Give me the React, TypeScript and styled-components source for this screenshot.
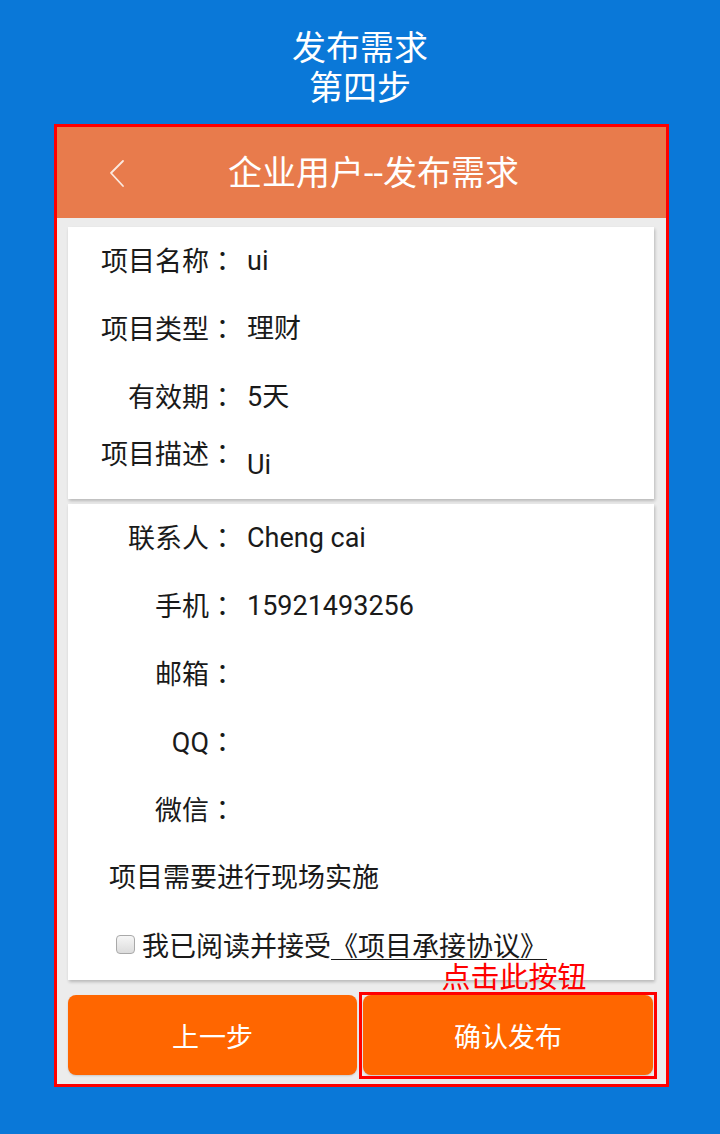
import styled, { createGlobalStyle } from 'styled-components';

const GlobalStyle = createGlobalStyle`
  html, body {
    margin: 0;
    padding: 0;
    background: #0a78d8;
  }
  body {
    font-family: Roboto, "Noto Sans CJK SC", sans-serif;
  }
`;

type Field = { label: string; value?: string };

const projectFields: Field[] = [
  { label: '项目名称', value: 'ui' },
  { label: '项目类型', value: '理财' },
  { label: '有效期', value: '5天' },
];

const contactFields: Field[] = [
  { label: '联系人', value: 'Cheng cai' },
  { label: '手机', value: '15921493256' },
  { label: '邮箱' },
  { label: 'QQ' },
  { label: '微信' },
];

const BackIcon = () => (
  <svg width="24" height="30" viewBox="0 0 24 30" fill="none">
    <path d="M16 3 L4 15 L16 28" stroke="#fbe9df" strokeWidth="1.8" strokeLinecap="round" strokeLinejoin="round" />
  </svg>
);

const App = () => {
  return (
    <Page>
      <GlobalStyle />
      <PageTitle>
        发布需求
        <br />
        第四步
      </PageTitle>
      <Frame>
        <Header>
          <BackButton>
            <BackIcon />
          </BackButton>
          <HeaderTitle>企业用户--发布需求</HeaderTitle>
        </Header>
        <Body>
          <Card>
            {projectFields.map((f) => (
              <Row key={f.label}>
                <Label>
                  {f.label}
                  <Colon>：</Colon>
                </Label>
                <Value>{f.value}</Value>
              </Row>
            ))}
            <Row top>
              <Label>
                项目描述<Colon>：</Colon>
              </Label>
              <Value lower>Ui</Value>
            </Row>
          </Card>
          <Card>
            {contactFields.map((f) => (
              <Row key={f.label}>
                <Label>
                  {f.label}
                  <Colon>：</Colon>
                </Label>
                <Value>{f.value}</Value>
              </Row>
            ))}
            <PlainRow>项目需要进行现场实施</PlainRow>
            <AgreeRow>
              <CheckBox type="checkbox" />
              <span>
                我已阅读并接受<AgreeLink>《项目承接协议》</AgreeLink>
              </span>
            </AgreeRow>
          </Card>
          <ButtonBar>
            <ActionButton>上一步</ActionButton>
            <Highlight>
              <ActionButton>确认发布</ActionButton>
              <HighlightFrame />
              <HighlightNote>点击此按钮</HighlightNote>
            </Highlight>
          </ButtonBar>
        </Body>
      </Frame>
    </Page>
  );
};

const Page = styled.div`
  min-height: 1134px;
  padding-top: 28px;
  box-sizing: border-box;
`;

const PageTitle = styled.div`
  color: #fff;
  font-size: 34px;
  line-height: 40px;
  text-align: center;
`;

const Frame = styled.div`
  margin: 16px 51px 0 54px;
  border: 3px solid #ff0000;
  background: #ececec;
  height: 963px;
  box-sizing: border-box;
  display: flex;
  flex-direction: column;
`;

const Header = styled.div`
  height: 91px;
  flex-shrink: 0;
  background: #e87b4c;
  display: flex;
  align-items: center;
  padding-left: 50px;
`;

const BackButton = styled.div`
  width: 24px;
  height: 30px;
  display: flex;
`;

const HeaderTitle = styled.div`
  flex: 1;
  margin-right: 50px;
  text-align: center;
  color: #fff;
  font-size: 34px;
  line-height: 40px;
`;

const Body = styled.div`
  padding: 9px 12px 0 11px;
  display: flex;
  flex-direction: column;
  gap: 5px;
`;

const Card = styled.div`
  background: #fff;
  box-shadow: 1px 2px 3px rgba(0, 0, 0, 0.22);
`;

const Row = styled.div<{ top?: boolean }>`
  height: 68px;
  display: grid;
  grid-template-columns: 168px 1fr;
  column-gap: 11px;
  align-items: ${(p) => (p.top ? 'start' : 'center')};
  padding-top: ${(p) => (p.top ? '4px' : '0')};
  box-sizing: border-box;
  font-size: 27px;
  line-height: 36px;
  color: #1a1a1a;
`;

const Label = styled.div`
  text-align: right;
  white-space: nowrap;
`;

const Colon = styled.span`
  font-family: "Noto Sans CJK TC", "Noto Sans CJK SC", sans-serif;
`;

const Value = styled.div<{ lower?: boolean }>`
  padding-top: ${(p) => (p.lower ? '12px' : '0')};
`;

const PlainRow = styled.div`
  height: 68px;
  display: flex;
  align-items: center;
  padding-left: 41px;
  padding-bottom: 6px;
  box-sizing: border-box;
  font-size: 27px;
  color: #1a1a1a;
`;

const AgreeRow = styled.div`
  height: 68px;
  display: flex;
  align-items: center;
  padding-left: 48px;
  padding-bottom: 3px;
  box-sizing: border-box;
  gap: 7px;
  font-size: 27px;
  color: #1a1a1a;
`;

const CheckBox = styled.input`
  appearance: none;
  margin: 0;
  width: 19px;
  height: 19px;
  border: 1px solid #a9a9a9;
  border-radius: 4px;
  background: linear-gradient(#f6f6f6, #dcdcdc);
  box-sizing: border-box;
`;

const AgreeLink = styled.span`
  text-decoration: underline;
  text-underline-offset: 3px;
  text-decoration-thickness: 1px;
`;

const ButtonBar = styled.div`
  margin-top: 10px;
  display: grid;
  grid-template-columns: 289px 290px;
  column-gap: 6px;
`;

const ActionButton = styled.button`
  width: 100%;
  height: 80px;
  border: none;
  border-radius: 8px;
  background: #ff6600;
  color: #fff;
  font-family: Roboto, "Noto Sans CJK SC", sans-serif;
  font-size: 27px;
  box-shadow: 0 1px 2px rgba(0, 0, 0, 0.15);
`;

const Highlight = styled.div`
  position: relative;
  display: flex;
`;

const HighlightFrame = styled.div`
  position: absolute;
  inset: -3px -4px -4px -4px;
  border: 3px solid #ff0000;
  pointer-events: none;
`;

const HighlightNote = styled.div`
  position: absolute;
  left: 50%;
  top: -34px;
  transform: translateX(calc(-50% + 6px));
  color: #ff0000;
  font-size: 29px;
  line-height: 34px;
  white-space: nowrap;
`;

export default App;
